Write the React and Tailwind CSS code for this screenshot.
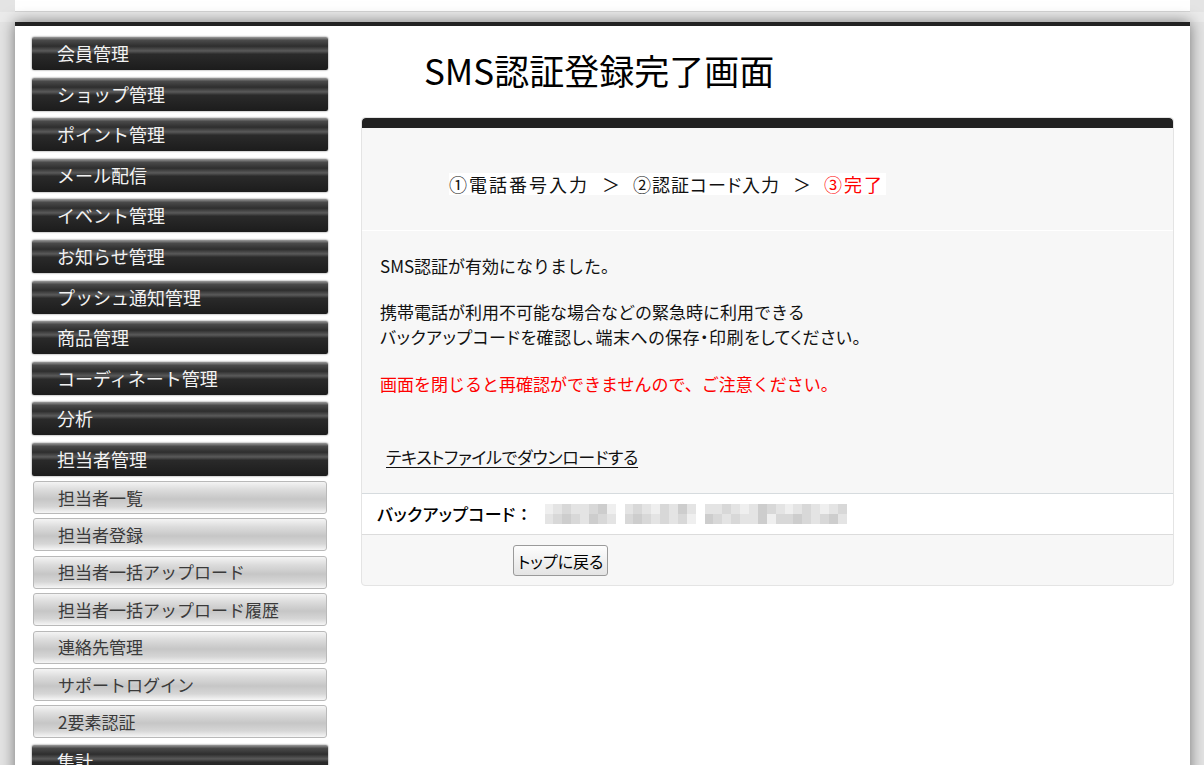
import React from 'react';

const mainMenu = [
  '会員管理',
  'ショップ管理',
  'ポイント管理',
  'メール配信',
  'イベント管理',
  'お知らせ管理',
  'プッシュ通知管理',
  '商品管理',
  'コーディネート管理',
  '分析',
];

const staffMenu = [
  '担当者一覧',
  '担当者登録',
  '担当者一括アップロード',
  '担当者一括アップロード履歴',
  '連絡先管理',
  'サポートログイン',
  '2要素認証',
];

// blurred backup code, rough pixel pattern
const codeRows = [
  '01211230 12102131 1121013210121012',
  '12321321 23212120 3212113022321231',
];

const shade = {
  '0': 'bg-[#eeeeee]',
  '1': 'bg-[#e2e2e2]',
  '2': 'bg-[#d4d4d4]',
  '3': 'bg-[#c8c8c8]',
  ' ': 'bg-transparent',
};

const DarkItem = ({ label }) => (
  <div className="h-[33px] rounded-[2px] shadow-[0_0_2px_rgba(0,0,0,0.6)] bg-[linear-gradient(to_bottom,#9a9a9a_0%,#4a4a4a_10%,#2e2e2e_28%,#5a5a5a_42%,#2a2a2a_52%,#1c1c1c_100%)] flex items-center pl-[25px] text-[18px] text-[#f2f2f2]">
    {label}
  </div>
);

const LightItem = ({ label }) => (
  <div className="h-[33px] rounded-[3px] border border-[#b9b9b9] bg-[linear-gradient(to_bottom,#f4f4f4_0%,#dcdcdc_25%,#c6c6c6_55%,#d6d6d6_80%,#f6f6f6_100%)] flex items-center pl-[24px] text-[17px] text-[#3a3a3a]">
    {label}
  </div>
);

const BlurCode = () => (
  <div className="flex flex-col opacity-90">
    {codeRows.map((row, r) => (
      <div key={r} className="flex">
        {row.split('').map((c, i) => (
          <span key={i} className={`w-[8.9px] h-[10px] ${shade[c]}`} />
        ))}
      </div>
    ))}
  </div>
);

export default function App() {
  return (
    <div
      className="h-screen overflow-hidden bg-[#e4e4e4]"
      style={{ fontFamily: '"Noto Sans CJK JP", "Noto Sans", sans-serif' }}
    >
      {/* header strip */}
      <div className="ml-[15px] w-[1175px] h-[12px] bg-white border-b border-[#d4d4d4]" />
      <div className="h-[10px] bg-[#ebebeb]" />

      <div className="ml-[15px] w-[1175px] h-[800px] bg-white border-t-4 border-[#222] shadow-[0_0_14px_rgba(0,0,0,0.5)] flex pl-[17px] pr-[16px] pt-[11px]">
        {/* sidebar */}
        <div className="w-[296px] shrink-0 flex flex-col">
          <div className="flex flex-col gap-[7.6px]">
            {mainMenu.map((m) => (
              <DarkItem key={m} label={m} />
            ))}
            <DarkItem label="担当者管理" />
          </div>
          <div className="flex flex-col gap-[4.4px] mt-[5px] px-[1px]">
            {staffMenu.map((m) => (
              <LightItem key={m} label={m} />
            ))}
          </div>
          <div className="mt-[7px]">
            <DarkItem label="集計" />
          </div>
        </div>

        {/* main */}
        <div className="flex-1 ml-[33px]">
          <h1 className="h-[80px] pl-[63px] pt-[10px] text-[35px] leading-[46px] text-black">
            SMS認証登録完了画面
          </h1>

          <div className="border border-[#e4e4e4] rounded-[4px] bg-[#f7f7f7] overflow-hidden">
            <div className="h-[10px] bg-[#222] rounded-t-[4px]" />

            <div className="h-[103px] border-b border-white pl-[87px] pt-[45px]">
              <span className="bg-white text-[18px] leading-[22px] text-[#111] inline-flex">
                <span className="tracking-[2px]">①電話番号入力</span>
                <span className="mx-[13px]">＞</span>
                <span className="[font-feature-settings:'palt'] tracking-[1px]">②認証コード入力</span>
                <span className="mx-[13px]">＞</span>
                <span className="text-[#ff0000] tracking-[2px] pr-[2px]">③完了</span>
              </span>
            </div>

            <div className="h-[263px] border-b border-[#d6dbde] pl-[18px] pt-[22px] text-[17px] leading-[25px] text-[#111]">
              <p>SMS認証が有効になりました。</p>
              <p className="mt-[21px]">携帯電話が利用不可能な場合などの緊急時に利用できる</p>
              <p className="[font-feature-settings:'palt'] tracking-[0.5px]">バックアップコードを確認し、端末への保存・印刷をしてください。</p>
              <p className="mt-[22px] text-[#ff0000]">画面を閉じると再確認ができませんので、ご注意ください。</p>
              <p className="mt-[48px] pl-[6px]">
                <a href="#" className="underline underline-offset-[3px] text-[#111] [font-feature-settings:'palt'] tracking-[-0.3px]">
                  テキストファイルでダウンロードする
                </a>
              </p>
            </div>

            <div className="h-[41px] bg-white border-b border-[#dcdcdc] flex items-center pl-[15px]">
              <span className="text-[17px] font-medium text-black whitespace-nowrap [font-feature-settings:'palt'] tracking-[0.3px] mr-[16px]">バックアップコード ：</span>
              <BlurCode />
            </div>

            <div className="h-[50px] pl-[151px] pt-[10px]">
              <button className="h-[31px] px-[4px] rounded-[3px] border border-[#9a9a9a] bg-[linear-gradient(to_bottom,#fdfdfd,#e4e4e4)] text-[16px] leading-[20px] text-black [font-feature-settings:'palt']">
                トップに戻る
              </button>
            </div>
          </div>
        </div>
      </div>
    </div>
  );
}
